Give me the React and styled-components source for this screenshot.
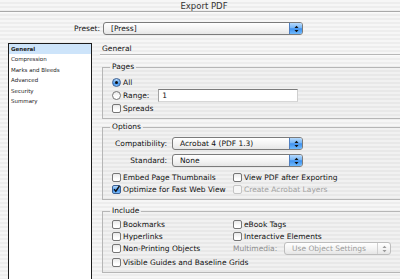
import React from 'react'
import styled, { createGlobalStyle } from 'styled-components'

const GlobalStyle = createGlobalStyle`
  html, body {
    margin: 0;
    padding: 0;
  }
  body {
    background: #eeeeee;
    font-family: "DejaVu Sans", "Liberation Sans", sans-serif;
  }
`

const Window = styled.div`
  width: 400px;
  height: 279px;
  overflow: hidden;
  display: flex;
  flex-direction: column;
  background: repeating-linear-gradient(to bottom, #f6f6f6 0 2px, #ededed 2px 4px);
  font-family: "DejaVu Sans", "Liberation Sans", sans-serif;
  font-size: 7.5px;
  color: #111;
`

const TitleBar = styled.div`
  flex-shrink: 0;
  height: 11px;
  padding-left: 8px;
  display: flex;
  justify-content: center;
  align-items: flex-end;
  overflow: hidden;
  border-bottom: 1px solid #a9a9a9;
  box-shadow: 0 1px 0 #fbfbfb;
  font-size: 8.5px;
  line-height: 10px;
  color: #333;
`

const PresetRow = styled.div`
  flex-shrink: 0;
  margin-top: 10px;
  height: 13px;
  display: flex;
  align-items: center;
`

const PresetLabel = styled.span`
  width: 100px;
  padding-right: 3px;
  text-align: right;
`

const Body = styled.div`
  display: flex;
  margin-top: 8px;
`

const Sidebar = styled.ul`
  flex-shrink: 0;
  box-sizing: border-box;
  width: 84px;
  height: 260px;
  margin: 0 0 0 8px;
  padding: 0;
  list-style: none;
  background: #fff;
  border: 1px solid #1c1c1c;
  font-size: 5.5px;
  color: #222;
`

const SideItem = styled.li`
  height: 10.4px;
  line-height: 10.4px;
  padding-left: 2px;
  font-weight: ${p => (p.$active ? 'bold' : 'normal')};
  background: ${p => (p.$active ? '#cde4fa' : 'transparent')};
`

const Pane = styled.div`
  flex-shrink: 0;
  width: 320px;
  margin-left: 8px;
`

const Heading = styled.div`
  height: 11px;
  line-height: 12px;
  padding-left: 2px;
  border-bottom: 1px solid #b7b7b7;
  box-shadow: 0 1px 0 #fbfbfb;
`

const Group = styled.fieldset`
  min-width: 0;
  margin: ${p => p.$top}px 0 0 2px;
  padding: ${p => p.$padTop}px 0 ${p => p.$padBottom}px 9px;
  border: 1px solid #b6b6b6;
  background: rgba(0, 0, 0, 0.02);
`

const Legend = styled.legend`
  margin-left: -2px;
  padding: 0 2px;
  line-height: 10px;
`

const Stack = styled.div`
  display: flex;
  flex-direction: column;
`

const Grid = styled.div`
  display: grid;
  grid-template-columns: 121px 1fr;
  grid-auto-rows: ${p => p.$rows || '12px'};
  grid-template-rows: ${p => p.$rows || 'none'};
`

const Row = styled.label`
  display: flex;
  align-items: center;
  gap: 2px;
  height: ${p => p.$h || 12}px;
  white-space: nowrap;
  color: ${p => (p.$disabled ? '#a2a2a2' : 'inherit')};
  grid-column: ${p => (p.$span ? '1 / -1' : 'auto')};
`

const Box = styled.span`
  flex-shrink: 0;
  box-sizing: border-box;
  width: 9px;
  height: 9px;
  border-radius: 2px;
  border: 1px solid ${p => (p.$disabled ? '#c4c4c4' : p.$checked ? '#3a5f93' : '#767676')};
  background: ${p =>
    p.$checked
      ? 'linear-gradient(#b4d8fb, #5ea6f1 50%, #3b8ced 55%, #7fc0fb)'
      : p.$disabled
      ? '#f6f6f6'
      : 'linear-gradient(#e9e9e9, #ffffff 70%)'};
  display: flex;
  align-items: center;
  justify-content: center;
`

const Radio = styled(Box)`
  border-radius: 50%;
  border-color: ${p => (p.$checked ? '#3a5f93' : '#767676')};
`

const Dot = styled.span`
  width: 3px;
  height: 3px;
  border-radius: 50%;
  background: #111;
`

const FieldRow = styled.div`
  display: flex;
  align-items: center;
  height: ${p => p.$h || 13}px;
  margin-bottom: ${p => p.$mb || 0}px;
`

const FieldLabel = styled.span`
  width: ${p => p.$w}px;
  margin-right: ${p => p.$gap}px;
  text-align: ${p => p.$align || 'right'};
  color: ${p => (p.$disabled ? '#8d8d8d' : 'inherit')};
  white-space: nowrap;
`

const TextInput = styled.div`
  box-sizing: border-box;
  width: 140px;
  height: 13px;
  margin-left: 7px;
  padding-left: 3px;
  line-height: 11px;
  background: #fff;
  border: 1px solid #a4a4a4;
  border-top-color: #7c7c7c;
  border-right-color: #cfcfcf;
  border-bottom-color: #d6d6d6;
`

const PopupBox = styled.div`
  box-sizing: border-box;
  width: ${p => p.$w}px;
  height: 13px;
  display: flex;
  align-items: stretch;
  overflow: hidden;
  border-radius: 3px;
  border: 1px solid ${p => (p.$disabled ? '#bdbdbd' : '#7b7b7b')};
  background: linear-gradient(#ffffff, #f3f3f3 55%, #e6e6e6);
  color: ${p => (p.$disabled ? '#9c9c9c' : '#111')};
`

const PopupText = styled.span`
  flex: 1;
  padding-left: 7px;
  line-height: 11px;
  white-space: nowrap;
`

const PopupArrow = styled.span`
  width: 12px;
  display: flex;
  align-items: center;
  justify-content: center;
  border-left: 1px solid ${p => (p.$disabled ? '#d0d0d0' : '#4f7fc0')};
  background: ${p =>
    p.$disabled
      ? 'transparent'
      : 'linear-gradient(#b7dafc, #75b5f6 45%, #3f91ee 52%, #6fbafd)'};
`

function Arrows({ color }) {
  return (
    <svg width="5" height="8" viewBox="0 0 5 8">
      <path d="M0.5 3 L2.5 0.8 L4.5 3 Z" fill={color} />
      <path d="M0.5 5 L2.5 7.2 L4.5 5 Z" fill={color} />
    </svg>
  )
}

function Popup({ w, children, disabled }) {
  return (
    <PopupBox $w={w} $disabled={disabled}>
      <PopupText>{children}</PopupText>
      <PopupArrow $disabled={disabled}>
        <Arrows color={disabled ? '#9a9a9a' : '#111'} />
      </PopupArrow>
    </PopupBox>
  )
}

function Check({ children, checked, disabled, span, h }) {
  return (
    <Row $disabled={disabled} $span={span} $h={h}>
      <Box $checked={checked} $disabled={disabled}>
        {checked && (
          <svg width="8" height="8" viewBox="0 0 8 8">
            <path d="M1.2 4.2 L3.2 6.6 L7.4 0.6" stroke="#111" strokeWidth="1.6" fill="none" />
          </svg>
        )}
      </Box>
      {children}
    </Row>
  )
}

function RadioRow({ children, checked }) {
  return (
    <Row as="div" $h={13}>
      <Radio $checked={checked}>{checked && <Dot />}</Radio>
      {children}
    </Row>
  )
}

const sections = ['General', 'Compression', 'Marks and Bleeds', 'Advanced', 'Security', 'Summary']

export default function App() {
  return (
    <>
      <GlobalStyle />
      <Window>
        <TitleBar>Export PDF</TitleBar>

        <PresetRow>
          <PresetLabel>Preset:</PresetLabel>
          <Popup w={200}>[Press]</Popup>
        </PresetRow>

        <Body>
          <Sidebar>
            {sections.map((s, i) => (
              <SideItem key={s} $active={i === 0}>{s}</SideItem>
            ))}
          </Sidebar>

          <Pane>
            <Heading>General</Heading>

            <Group $top={7} $padTop={4} $padBottom={3}>
              <Legend>Pages</Legend>
              <Stack>
                <RadioRow checked>All</RadioRow>
                <Row as="div" $h={13}>
                  <Radio />
                  Range:
                  <TextInput>1</TextInput>
                </Row>
                <Check h={13}>Spreads</Check>
              </Stack>
            </Group>

            <Group $top={3} $padTop={5} $padBottom={4}>
              <Legend>Options</Legend>
              <FieldRow $mb={4}>
                <FieldLabel $w={55} $gap={5}>Compatibility:</FieldLabel>
                <Popup w={131}>Acrobat 4 (PDF 1.3)</Popup>
              </FieldRow>
              <FieldRow $mb={4}>
                <FieldLabel $w={55} $gap={5}>Standard:</FieldLabel>
                <Popup w={131}>None</Popup>
              </FieldRow>
              <Grid>
                <Check>Embed Page Thumbnails</Check>
                <Check>View PDF after Exporting</Check>
                <Check checked>Optimize for Fast Web View</Check>
                <Check disabled>Create Acrobat Layers</Check>
              </Grid>
            </Group>

            <Group $top={6} $padTop={2} $padBottom={3}>
              <Legend>Include</Legend>
              <Grid $rows="12px 12px 13px 14px">
                <Check>Bookmarks</Check>
                <Check>eBook Tags</Check>
                <Check>Hyperlinks</Check>
                <Check>Interactive Elements</Check>
                <Check>Non-Printing Objects</Check>
                <FieldRow>
                  <FieldLabel $w={46} $gap={5} $align="left" $disabled>Multimedia:</FieldLabel>
                  <Popup w={107} disabled>Use Object Settings</Popup>
                </FieldRow>
                <Check span h={14}>Visible Guides and Baseline Grids</Check>
              </Grid>
            </Group>
          </Pane>
        </Body>
      </Window>
    </>
  )
}
